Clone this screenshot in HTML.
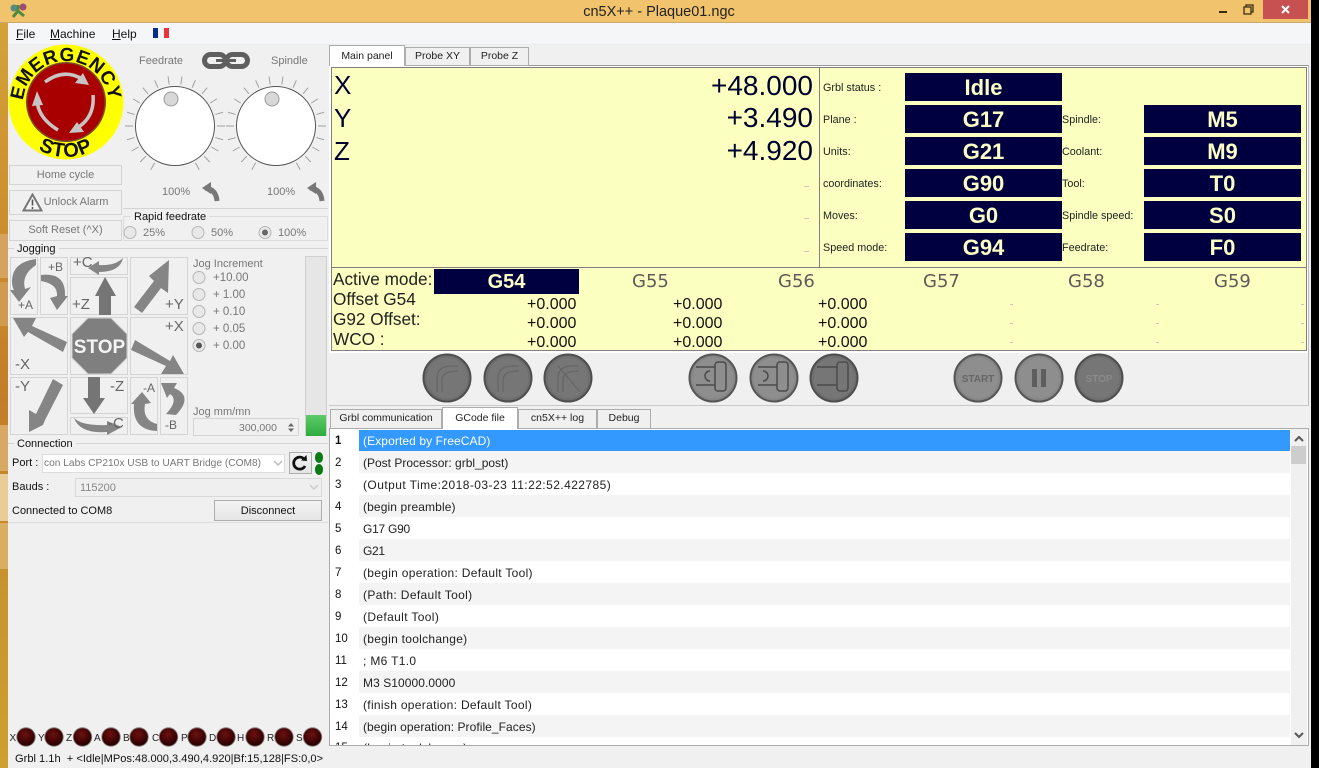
<!DOCTYPE html>
<html><head><meta charset="utf-8"><title>cn5X++ - Plaque01.ngc</title>
<style>
html,body{margin:0;padding:0;width:1319px;height:768px;overflow:hidden;background:#000}
body{position:relative;font-family:"Liberation Sans",sans-serif;font-size:12px;color:#111}
div,span.a{position:absolute}
.t{position:absolute;white-space:nowrap;line-height:14px;font-size:12px}
.g{color:#777}
.b{position:absolute;border:1px solid #d4d4d4;box-sizing:border-box;background:#f0f0f0}
.btn{position:absolute;border:1px solid #adadad;box-sizing:border-box;background:linear-gradient(#f3f3f3,#e5e5e5);text-align:center}
.d{background:#000040;color:#fbffc4;font-weight:bold;font-size:22px;line-height:29px;text-align:center;width:157px;height:28px}
.l{left:823px;font-size:10.8px;color:#222}
.l2{left:1062px;font-size:10.8px;color:#222}
.big{font-size:28px;line-height:32px;color:#000030;position:absolute;white-space:nowrap}
.v{font-size:16px;line-height:18px;color:#111;position:absolute;white-space:nowrap}
.m{font-size:17.2px;line-height:19px;color:#222;position:absolute;white-space:nowrap}
.gn{font-family:"DejaVu Sans",sans-serif;font-size:18px;line-height:20px;color:#5c5c5c;position:absolute;white-space:nowrap;top:272px}
.tab{position:absolute;box-sizing:border-box;border:1px solid #acacac;background:#f0f0f0;text-align:center;font-size:10.5px;line-height:17px;color:#222}
.on{background:#fff;border-bottom:0;line-height:20px}
.n{position:absolute;left:335px;font-size:11.5px;line-height:14px;color:#111}
.c{position:absolute;left:363px;font-size:12px;line-height:14px;color:#222;white-space:nowrap}
.r{position:absolute;left:359px;width:931px;height:22px;background:#f4f4f4}
.dash{position:absolute;width:5px;height:1px;background:#c8c8c0}
.j{position:absolute;white-space:nowrap;line-height:14px;color:#666;font-size:15px}
.js{position:absolute;white-space:nowrap;line-height:14px;color:#666;font-size:12px}
</style></head><body>

<!-- desktop strip -->
<div style="left:0;top:0;width:8px;height:768px;background:linear-gradient(#d5a43a 0,#cd9030 200px,#c27d28 400px,#c8952f 600px,#cda030 768px)"></div>
<div style="left:0;top:234px;width:8px;height:44px;background:#d6a35e"></div>
<div style="left:0;top:282px;width:8px;height:44px;background:#d29a50"></div>
<div style="left:0;top:425px;width:8px;height:46px;background:#d9a865"></div>
<div style="left:0;top:474px;width:8px;height:47px;background:#e9cc98"></div>
<div style="left:0;top:523px;width:8px;height:46px;background:#d8ae62"></div>

<!-- window -->
<div style="left:0;top:0;width:1311px;height:23px;background:#f0c36c;border-bottom:1px solid #c9ab72;box-sizing:border-box"></div>
<div style="left:8px;top:23px;width:1303px;height:745px;background:#f0f0f0"></div>
<div style="left:8px;top:23px;width:1303px;height:21px;background:#f5f6f7;border-bottom:1px solid #ececec"></div>
<div class="t" style="left:552px;top:5px;width:214px;text-align:center;font-size:14.5px;color:#222">cn5X++ - Plaque01.ngc</div>
<svg style="position:absolute;left:9px;top:2px" width="20" height="18" viewBox="0 0 20 18"><circle cx="5" cy="6" r="3.5" fill="#5a8a80"/><circle cx="14" cy="5" r="3.5" fill="#a04a70"/><path d="M9 9 4 15M9 9l6 5M9 9V3" stroke="#4e8a40" stroke-width="3"/></svg>
<div style="left:1263px;top:0;width:45px;height:19px;background:#c75050"></div>
<svg style="position:absolute;left:1219px;top:3px" width="82" height="14" viewBox="0 0 82 14"><path d="M0 9h8" stroke="#3a2c10" stroke-width="2"/><path d="M25 4h7v7h-7zM27 4V2h7v7h-2" fill="none" stroke="#3a2c10" stroke-width="1.3"/><path d="M63 3l7 7M70 3l-7 7" stroke="#fff" stroke-width="2"/></svg>

<!-- menu -->
<div class="t" style="left:16px;top:27px"><u>F</u>ile</div>
<div class="t" style="left:50px;top:27px"><u>M</u>achine</div>
<div class="t" style="left:112px;top:27px"><u>H</u>elp</div>
<div style="left:153px;top:28px;width:5px;height:10px;background:#0a2a8c"></div>
<div style="left:158px;top:28px;width:6px;height:10px;background:#f4f4f4"></div>
<div style="left:164px;top:28px;width:5px;height:10px;background:#e8323c"></div>

<!-- e-stop -->
<svg style="position:absolute;left:8px;top:44px" width="116" height="118" viewBox="8 44 116 118">
<defs><path id="ea" d="M23 104A43 43 0 0 1 109 104"/><path id="eb" d="M11 102A55 55 0 0 0 121 102"/></defs>
<circle cx="66" cy="102" r="57.500" fill="#ffff00"/>
<circle cx="66" cy="102" r="40" fill="#7a4a30"/><circle cx="66" cy="102" r="38.500" fill="#a80000"/>
<text font-family="Liberation Sans" font-weight="bold" font-size="19" fill="#111" letter-spacing=".6"><textPath href="#ea" startOffset="50%" text-anchor="middle">EMERGENCY</textPath></text>
<text font-family="Liberation Sans" font-weight="bold" font-size="20" fill="#111" letter-spacing="1"><textPath href="#eb" startOffset="50%" text-anchor="middle">STOP</textPath></text>
<g fill="none" stroke="#c8c4c4" stroke-width="3.500"><path d="M45 82Q64 68 82 79"/><path d="M37 100Q38 118 58 130"/><path d="M93 95Q95 117 77 128"/></g>
<g fill="#c8c4c4"><path d="M89 85 75 83 83 73zM37 91 32 106 43 105zM69 133 84 132 77 122z"/></g>
</svg>

<!-- home etc -->
<div class="b" style="left:9px;top:165px;width:113px;height:20px;text-align:center;line-height:18px;font-size:11px;color:#777">Home cycle</div>
<div class="b" style="left:9px;top:190px;width:113px;height:25px;text-align:center;line-height:23px;font-size:11px;color:#777;padding-left:21px">Unlock Alarm</div>
<svg style="position:absolute;left:22px;top:193px" width="21" height="19" viewBox="0 0 21 19"><path d="M10.5 1.5 1.5 17.5h18z" fill="#f4f4f4" stroke="#777" stroke-width="2"/><path d="M10.5 6.5v6M10.5 14v2" stroke="#555" stroke-width="1.6"/></svg>
<div class="b" style="left:9px;top:220px;width:113px;height:21px;text-align:center;line-height:19px;font-size:11px;color:#777">Soft Reset (^X)</div>

<!-- dials -->
<svg style="position:absolute;left:120px;top:45px" width="210" height="165" viewBox="120 45 210 165">
<defs>
<g id="dial">
<g stroke="#a0a0a0" stroke-width="1">
<line x1="0" y1="-42" x2="0" y2="-50" transform="rotate(8)"/>
<line x1="0" y1="-42" x2="0" y2="-50" transform="rotate(-8)"/>
<line x1="0" y1="-42" x2="0" y2="-50" transform="rotate(24)"/>
<line x1="0" y1="-42" x2="0" y2="-50" transform="rotate(-24)"/>
<line x1="0" y1="-42" x2="0" y2="-50" transform="rotate(40)"/>
<line x1="0" y1="-42" x2="0" y2="-50" transform="rotate(-40)"/>
<line x1="0" y1="-42" x2="0" y2="-50" transform="rotate(57)"/>
<line x1="0" y1="-42" x2="0" y2="-50" transform="rotate(-57)"/>
<line x1="0" y1="-42" x2="0" y2="-50" transform="rotate(74)"/>
<line x1="0" y1="-42" x2="0" y2="-50" transform="rotate(-74)"/>
<line x1="0" y1="-42" x2="0" y2="-50" transform="rotate(90)"/>
<line x1="0" y1="-42" x2="0" y2="-50" transform="rotate(-90)"/>
<line x1="0" y1="-42" x2="0" y2="-50" transform="rotate(106)"/>
<line x1="0" y1="-42" x2="0" y2="-50" transform="rotate(-106)"/>
<line x1="0" y1="-42" x2="0" y2="-50" transform="rotate(120)"/>
<line x1="0" y1="-42" x2="0" y2="-50" transform="rotate(-120)"/>
<line x1="0" y1="-42" x2="0" y2="-50" transform="rotate(136)"/>
<line x1="0" y1="-42" x2="0" y2="-50" transform="rotate(-136)"/>
<line x1="0" y1="-42" x2="0" y2="-50" transform="rotate(151)"/>
<line x1="0" y1="-42" x2="0" y2="-50" transform="rotate(-151)"/>
</g>
<circle r="39.500" fill="#fff" stroke="#555" stroke-width="1"/>
<circle cx="-4" cy="-27" r="7" fill="#d8d8d8" stroke="#999" stroke-width="1"/>
</g>
<g id="back"><path d="M3 3Q14 4 15 16" fill="none" stroke="#777" stroke-width="5"/><path d="M0 3 9 -3 9 9z" fill="#777"/></g>
</defs>
<use href="#dial" x="175" y="126"/><use href="#dial" x="276" y="126"/>
<use href="#back" x="202" y="185"/><use href="#back" x="307" y="185"/>
<!-- chain -->
<g fill="none" stroke="#5f5f5f" stroke-width="5"><rect x="204.500" y="54.500" width="21" height="12" rx="6"/><rect x="226.500" y="54.500" width="21" height="12" rx="6"/></g>
<path d="M216 60.500h20" stroke="#5f5f5f" stroke-width="3"/>
</svg>
<div class="t g" style="left:139px;top:54px;font-size:11px">Feedrate</div>
<div class="t g" style="left:271px;top:54px;font-size:11px">Spindle</div>
<div class="t g" style="left:162px;top:185px;font-size:11px">100%</div>
<div class="t g" style="left:267px;top:185px;font-size:11px">100%</div>

<!-- rapid -->
<div style="left:123px;top:208px;width:205px;height:1px;background:#d4d4d4"></div>
<div style="left:123px;top:216px;width:205px;height:25px;border:1px solid #dcdcdc;box-sizing:border-box"></div>
<div class="t" style="left:131px;top:210px;background:#f0f0f0;padding:0 3px;font-size:11px">Rapid feedrate</div>
<svg style="position:absolute;left:120px;top:225px" width="160" height="16" viewBox="120 225 160 16"><g fill="#e8e8e8" stroke="#b5b5b5"><circle cx="130" cy="232.500" r="6"/><circle cx="198" cy="232.500" r="6"/><circle cx="265" cy="232.500" r="6"/></g><circle cx="265" cy="232.500" r="3" fill="#666"/></svg>
<div class="t g" style="left:143px;top:226px;font-size:11px">25%</div>
<div class="t g" style="left:211px;top:226px;font-size:11px">50%</div>
<div class="t g" style="left:278px;top:226px;font-size:11px">100%</div>

<!-- jogging -->
<div style="left:8px;top:248px;width:320px;height:1px;background:#d4d4d4"></div>
<div class="t" style="left:14px;top:242px;background:#f0f0f0;padding:0 3px;font-size:11px">Jogging</div>
<div class="b" style="left:10px;top:257px;width:28px;height:58px"></div>
<div class="b" style="left:40px;top:257px;width:28px;height:58px"></div>
<div class="b" style="left:70px;top:257px;width:58px;height:18px"></div>
<div class="b" style="left:70px;top:277px;width:58px;height:38px"></div>
<div class="b" style="left:130px;top:257px;width:58px;height:58px"></div>
<div class="b" style="left:10px;top:317px;width:58px;height:58px"></div>
<div class="b" style="left:70px;top:317px;width:58px;height:58px"></div>
<div class="b" style="left:130px;top:317px;width:58px;height:58px"></div>
<div class="b" style="left:10px;top:377px;width:58px;height:58px"></div>
<div class="b" style="left:70px;top:377px;width:58px;height:37px"></div>
<div class="b" style="left:70px;top:417px;width:58px;height:18px"></div>
<div class="b" style="left:130px;top:377px;width:28px;height:58px"></div>
<div class="b" style="left:160px;top:377px;width:28px;height:58px"></div>
<svg style="position:absolute;left:8px;top:255px" width="182" height="182" viewBox="8 255 182 182">
<g fill="#858585">
<path d="M169 260 168 293 161 288 142 313 134 307 154 281 149 276z"/>
<path d="M13 318 36 318 32 326 67 342 63 352 28 332 24 337z"/>
<path d="M184 374 161 374 166 366 131 350 135 340 170 361 173 355z"/>
<path d="M29 432 29 410 36 414 53 379 63 385 45 420 43 425z"/>
<path d="M105 277 116 296 111 296 111 315 99 315 99 296 95 296z" fill="#757575"/>
<path d="M88 377H100V398H105L94 414 83 398H88z" fill="#757575"/>
<!-- curved arrows -->
<path d="M36 259Q13 262 12 280Q12 287 14 290L10 290 19 302 31 287 25 289Q21 275 36 265Z"/>
<path d="M41 275Q66 272 65 296L68 296 57 310 50 298 57 296Q58 284 41 281Z"/>
<path d="M123 258Q115 266 99 265L99 261 88 268 99 275 99 272Q120 272 123 258Z"/>
<path d="M74 418Q82 426 107 425L107 421 122 427 107 435 107 432Q80 434 74 418Z"/>
<path d="M157 431Q132 430 134 404L131 404 142 392 151 403 145 404Q142 420 157 424Z"/>
<path d="M176 415Q194 396 174 388L177 383 161 383 167 398 170 394Q179 400 166 414Z"/>
</g>
<path d="M88 318H111L127 334V358L111 374H88L72 358V334z" fill="#7f7f7f" stroke="#d0d0d0" stroke-width="1"/>
<text x="99.500" y="353" text-anchor="middle" font-family="Liberation Sans" font-weight="bold" font-size="19" fill="#f4f4f4">STOP</text>
</svg>
<div class="js" style="left:18px;top:298px">+A</div>
<div class="js" style="left:48px;top:260px">+B</div>
<div class="j" style="left:73px;top:256px">+C</div>
<div class="j" style="left:72px;top:298px">+Z</div>
<div class="j" style="left:165px;top:298px">+Y</div>
<div class="j" style="left:165px;top:320px">+X</div>
<div class="j" style="left:15px;top:358px">-X</div>
<div class="j" style="left:15px;top:380px">-Y</div>
<div class="j" style="left:110px;top:380px">-Z</div>
<div class="j" style="left:108px;top:417px">-C</div>
<div class="js" style="left:143px;top:381px">-A</div>
<div class="js" style="left:165px;top:418px">-B</div>

<div class="t g" style="left:193px;top:257px;font-size:11px">Jog Increment</div>
<svg style="position:absolute;left:190px;top:268px" width="20" height="86" viewBox="190 268 20 86"><g fill="#e8e8e8" stroke="#b5b5b5"><circle cx="199" cy="277.500" r="6"/><circle cx="199" cy="294.500" r="6"/><circle cx="199" cy="311.500" r="6"/><circle cx="199" cy="328.500" r="6"/><circle cx="199" cy="345.500" r="6"/></g><circle cx="199" cy="345.500" r="3" fill="#555"/></svg>
<div class="t g" style="left:213px;top:271px;font-size:11.500px">+10.00</div>
<div class="t g" style="left:213px;top:288px;font-size:11.500px">+ 1.00</div>
<div class="t g" style="left:213px;top:305px;font-size:11.500px">+ 0.10</div>
<div class="t g" style="left:213px;top:322px;font-size:11.500px">+ 0.05</div>
<div class="t g" style="left:213px;top:339px;font-size:11.500px">+ 0.00</div>
<div class="t g" style="left:193px;top:405px;font-size:11px">Jog mm/mn</div>
<div class="b" style="left:193px;top:418px;width:106px;height:18px"></div>
<div class="t g" style="left:239px;top:421px;font-size:10.500px">300,000</div>
<svg style="position:absolute;left:285px;top:421px" width="12" height="13" viewBox="0 0 12 13"><path d="M3 5.500h6L6 2zM3 7.500h6L6 11z" fill="#666"/></svg>
<div style="left:305px;top:256px;width:22px;height:180px;background:#e6e6e6;border:1px solid #d0d0d0;box-sizing:border-box"></div>
<div style="left:306px;top:415px;width:20px;height:21px;background:linear-gradient(#5cca6a,#2eac3e)"></div>

<!-- connection -->
<div style="left:8px;top:443px;width:320px;height:1px;background:#d4d4d4"></div>
<div class="t" style="left:14px;top:437px;background:#f0f0f0;padding:0 3px;font-size:11px">Connection</div>
<div class="t" style="left:12px;top:456px;font-size:11px">Port :</div>
<div style="left:42px;top:454px;width:243px;height:19px;background:#fff;border:1px solid #ddd;box-sizing:border-box"></div>
<div class="t g" style="left:44px;top:457px;font-size:10.200px">con Labs CP210x USB to UART Bridge (COM8)</div>
<svg style="position:absolute;left:273px;top:460px" width="10" height="7"><path d="M1 1l4 4 4-4" fill="none" stroke="#bbb" stroke-width="1.500"/></svg>
<div class="btn" style="left:289px;top:452px;width:23px;height:22px"></div>
<svg style="position:absolute;left:291px;top:454px" width="18" height="18" viewBox="0 0 18 18"><path d="M13.500 5.500A6 6 0 1 0 14 12" fill="none" stroke="#111" stroke-width="2.800"/><path d="M10 6.500 16 7 15.500 1z" fill="#111"/></svg>
<div style="left:315px;top:452px;width:8px;height:11px;border-radius:4px/5px;background:#0a7a14"></div>
<div style="left:315px;top:464px;width:8px;height:11px;border-radius:4px/5px;background:#0a7a14"></div>
<div class="t" style="left:12px;top:480px;font-size:11px">Bauds :</div>
<div style="left:75px;top:478px;width:247px;height:19px;background:#efefef;border:1px solid #d8d8d8;box-sizing:border-box"></div>
<div class="t" style="left:80px;top:481px;font-size:11px;color:#888">115200</div>
<svg style="position:absolute;left:309px;top:484px" width="10" height="7"><path d="M1 1l4 4 4-4" fill="none" stroke="#ccc" stroke-width="1.500"/></svg>
<div class="t" style="left:12px;top:504px;font-size:11px">Connected to COM8</div>
<div class="btn" style="left:214px;top:500px;width:108px;height:21px;line-height:20px;font-size:11px">Disconnect</div>
<div style="left:8px;top:522px;width:320px;height:1px;background:#dcdcdc"></div>

<!-- LEDs -->
<svg style="position:absolute;left:8px;top:725px" width="320" height="24" viewBox="8 725 320 24">
<defs><radialGradient id="lg" cx=".45" cy=".35" r=".6"><stop offset="0" stop-color="#6e1010"/><stop offset="1" stop-color="#2c0000"/></radialGradient>
<g id="led"><circle r="9.700" fill="#8a8080"/><circle r="8.800" fill="url(#lg)"/></g></defs>
<use href="#led" x="26" y="737"/><use href="#led" x="54" y="737"/><use href="#led" x="82.500" y="737"/><use href="#led" x="111" y="737"/><use href="#led" x="139" y="737"/><use href="#led" x="168.500" y="737"/><use href="#led" x="197" y="737"/><use href="#led" x="226" y="737"/><use href="#led" x="255" y="737"/><use href="#led" x="284" y="737"/><use href="#led" x="312.500" y="737"/>
<g font-family="Liberation Sans" font-size="10" fill="#222"><text x="9.500" y="741">X</text><text x="38" y="741">Y</text><text x="66" y="741">Z</text><text x="94" y="741">A</text><text x="123" y="741">B</text><text x="152" y="741">C</text><text x="181" y="741">P</text><text x="209" y="741">D</text><text x="237" y="741">H</text><text x="267" y="741">R</text><text x="296" y="741">S</text></g>
</svg>
<div class="t" style="left:15px;top:752px;font-size:11.100px;white-space:pre">Grbl 1.1h  + &lt;Idle|MPos:48.000,3.490,4.920|Bf:15,128|FS:0,0&gt;</div>

<!-- top tabs -->
<div style="left:329px;top:65px;width:980px;height:340px;border-top:1px solid #9a9a9a;border-right:1px solid #bdbdbd;box-sizing:border-box"></div>
<div class="tab on" style="left:329px;top:45px;width:76px;height:21px;z-index:2">Main panel</div>
<div class="tab" style="left:405px;top:47px;width:65px;height:19px">Probe XY</div>
<div class="tab" style="left:470px;top:47px;width:59px;height:19px">Probe Z</div>

<!-- yellow panel -->
<div style="left:329px;top:66px;width:979px;height:287px;background:#fff"></div>
<div style="left:331px;top:67px;width:976px;height:284px;background:#fbffbf;border:1px solid #808080;box-sizing:border-box"></div>
<div style="left:819px;top:68px;width:1px;height:199px;background:#808080"></div>
<div style="left:331px;top:267px;width:976px;height:1px;background:#808080"></div>

<div class="big" style="left:334px;top:69px;font-size:26px">X</div>
<div class="big" style="left:334px;top:102px;font-size:26px">Y</div>
<div class="big" style="left:334px;top:135px;font-size:26px">Z</div>
<div class="big" style="right:506px;top:70px">+48.000</div>
<div class="big" style="right:506px;top:102px">+3.490</div>
<div class="big" style="right:506px;top:135px">+4.920</div>
<div class="dash" style="left:804px;top:186px"></div><div class="dash" style="left:804px;top:218px"></div><div class="dash" style="left:804px;top:251px"></div>

<div class="t l" style="top:81px">Grbl status :</div>
<div class="t l" style="top:113px">Plane :</div>
<div class="t l" style="top:145px">Units:</div>
<div class="t l" style="top:177px">coordinates:</div>
<div class="t l" style="top:209px">Moves:</div>
<div class="t l" style="top:241px">Speed mode:</div>
<div class="d" style="left:905px;top:73px">Idle</div>
<div class="d" style="left:905px;top:105px">G17</div>
<div class="d" style="left:905px;top:137px">G21</div>
<div class="d" style="left:905px;top:169px">G90</div>
<div class="d" style="left:905px;top:201px">G0</div>
<div class="d" style="left:905px;top:233px">G94</div>
<div class="t l2" style="top:113px">Spindle:</div>
<div class="t l2" style="top:145px">Coolant:</div>
<div class="t l2" style="top:177px">Tool:</div>
<div class="t l2" style="top:209px">Spindle speed:</div>
<div class="t l2" style="top:241px">Feedrate:</div>
<div class="d" style="left:1144px;top:105px">M5</div>
<div class="d" style="left:1144px;top:137px">M9</div>
<div class="d" style="left:1144px;top:169px">T0</div>
<div class="d" style="left:1144px;top:201px">S0</div>
<div class="d" style="left:1144px;top:233px">F0</div>

<div class="m" style="left:333px;top:270px">Active mode:</div>
<div class="m" style="left:333px;top:290px">Offset G54</div>
<div class="m" style="left:333px;top:310px">G92 Offset:</div>
<div class="m" style="left:333px;top:330px">WCO :</div>
<div class="d" style="left:434px;top:269px;width:145px;height:25px;line-height:27px;font-size:20px">G54</div>
<div class="gn" style="left:632px">G55</div>
<div class="gn" style="left:778px">G56</div>
<div class="gn" style="left:923px">G57</div>
<div class="gn" style="left:1068px">G58</div>
<div class="gn" style="left:1214px">G59</div>
<div class="v" style="left:527px;top:296px">+0.000</div><div class="v" style="left:673px;top:296px">+0.000</div><div class="v" style="left:818px;top:296px">+0.000</div>
<div class="v" style="left:527px;top:315px">+0.000</div><div class="v" style="left:673px;top:315px">+0.000</div><div class="v" style="left:818px;top:315px">+0.000</div>
<div class="v" style="left:527px;top:334px">+0.000</div><div class="v" style="left:673px;top:334px">+0.000</div><div class="v" style="left:818px;top:334px">+0.000</div>
<div class="dash" style="left:1010px;top:304px;width:3px"></div><div class="dash" style="left:1156px;top:304px;width:3px"></div><div class="dash" style="left:1301px;top:304px;width:3px"></div>
<div class="dash" style="left:1010px;top:323px;width:3px"></div><div class="dash" style="left:1156px;top:323px;width:3px"></div><div class="dash" style="left:1301px;top:323px;width:3px"></div>
<div class="dash" style="left:1010px;top:342px;width:3px"></div><div class="dash" style="left:1156px;top:342px;width:3px"></div><div class="dash" style="left:1301px;top:342px;width:3px"></div>

<!-- round buttons -->
<svg style="position:absolute;left:420px;top:352px" width="710" height="52" viewBox="420 352 710 52">
<defs><g id="rb"><circle r="23.500" fill="#6e6e6e" stroke="#4e4e4e" stroke-width="2"/><circle r="20.500" fill="#767676"/></g><g id="rb2"><circle r="23.500" fill="#868686" stroke="#555" stroke-width="2"/><circle r="20.500" fill="#8e8e8e"/></g></defs>
<use href="#rb" x="447" y="378"/><use href="#rb" x="508" y="378"/><use href="#rb" x="568" y="378"/>
<use href="#rb2" x="713" y="378"/><use href="#rb2" x="774" y="378"/><use href="#rb" x="834" y="378"/>
<use href="#rb2" x="978" y="378"/><use href="#rb2" x="1039" y="378"/><use href="#rb" x="1099" y="378"/>
<g fill="none" stroke="#666" stroke-width="1.300">
<path d="M437 392V378Q437 366 452 366H458M442 392V380Q442 371 458 371"/>
<path d="M498 392V378Q498 366 513 366H519M503 392V380Q503 371 519 371"/>
<path d="M558 392V378Q558 366 573 366H579M563 392V380Q563 371 579 371M558 366 580 392"/>
</g>
<g fill="none" stroke="#4a4a4a" stroke-width="1.500">
<path d="M696 367H715M696 385H715"/><rect x="715" y="362" width="11" height="29" rx="3"/><path d="M710 371A5 5 0 1 0 710 381"/>
<path d="M758 367H777M758 385H777"/><rect x="777" y="362" width="11" height="29" rx="3"/><path d="M763 371A5 5 0 1 1 763 381"/>
<path d="M817 367H837M817 385H837"/><rect x="837" y="362" width="11" height="29" rx="3"/>
</g>
<text x="978" y="382" text-anchor="middle" font-family="Liberation Sans" font-weight="bold" font-size="10" fill="#666">START</text>
<path d="M1032 369h5v18h-5zM1041 369h5v18h-5z" fill="#5e5e5e"/>
<text x="1099" y="382" text-anchor="middle" font-family="Liberation Sans" font-weight="bold" font-size="10" fill="#8a8a8a">STOP</text>
</svg>

<!-- bottom tabs -->
<div style="left:329px;top:405px;width:980px;height:1px;background:#c8c8c8"></div>
<div style="left:329px;top:428px;width:980px;height:318px;background:#fff;border:1px solid #acacac;box-sizing:border-box"></div>
<div class="tab" style="left:330px;top:409px;width:112px;height:20px">Grbl communication</div>
<div class="tab on" style="left:442px;top:407px;width:76px;height:22px;z-index:2">GCode file</div>
<div class="tab" style="left:518px;top:409px;width:79px;height:20px">cn5X++ log</div>
<div class="tab" style="left:597px;top:409px;width:54px;height:20px">Debug</div>

<!-- table -->
<div style="left:359px;top:430px;width:931px;height:21px;background:#3399ff"></div>
<div class="r" style="top:451px"></div><div class="r" style="top:495px"></div><div class="r" style="top:539px"></div><div class="r" style="top:583px"></div><div class="r" style="top:627px"></div><div class="r" style="top:671px"></div><div class="r" style="top:715px"></div>
<div class="n" style="top:434px;font-weight:bold">1</div><div class="c" style="top:434px;color:#fff;letter-spacing:.1px">(Exported by FreeCAD)</div>
<div class="n" style="top:456px">2</div><div class="c" style="top:456px">(Post Processor: grbl_post)</div>
<div class="n" style="top:478px">3</div><div class="c" style="top:478px;letter-spacing:.44px">(Output Time:2018-03-23 11:22:52.422785)</div>
<div class="n" style="top:500px">4</div><div class="c" style="top:500px;letter-spacing:.12px">(begin preamble)</div>
<div class="n" style="top:522px">5</div><div class="c" style="top:522px;letter-spacing:-.25px">G17 G90</div>
<div class="n" style="top:544px">6</div><div class="c" style="top:544px;letter-spacing:-.3px">G21</div>
<div class="n" style="top:566px">7</div><div class="c" style="top:566px;letter-spacing:.3px">(begin operation: Default Tool)</div>
<div class="n" style="top:588px">8</div><div class="c" style="top:588px;letter-spacing:.35px">(Path: Default Tool)</div>
<div class="n" style="top:610px">9</div><div class="c" style="top:610px;letter-spacing:.36px">(Default Tool)</div>
<div class="n" style="top:632px">10</div><div class="c" style="top:632px;letter-spacing:.28px">(begin toolchange)</div>
<div class="n" style="top:654px">11</div><div class="c" style="top:654px;letter-spacing:.33px">; M6 T1.0</div>
<div class="n" style="top:676px">12</div><div class="c" style="top:676px;letter-spacing:.07px">M3 S10000.0000</div>
<div class="n" style="top:698px">13</div><div class="c" style="top:698px;letter-spacing:.31px">(finish operation: Default Tool)</div>
<div class="n" style="top:720px">14</div><div class="c" style="top:720px;letter-spacing:.06px">(begin operation: Profile_Faces)</div>
<div style="left:335px;top:741px;width:300px;height:4px;overflow:hidden"><div class="c" style="left:28px;top:0;letter-spacing:.28px">(begin toolchange)</div><div class="n" style="left:0;top:0">15</div></div>
<div style="left:1291px;top:429px;width:16px;height:316px;background:#f0f0f0"></div>
<div style="left:1291px;top:446px;width:15px;height:18px;background:#cdcdcd"></div>
<svg style="position:absolute;left:1291px;top:432px" width="16" height="310" viewBox="0 0 16 310"><path d="M4 9l4-4 4 4" fill="none" stroke="#555" stroke-width="2"/><path d="M4 301l4 4 4-4" fill="none" stroke="#555" stroke-width="2"/></svg>
</body></html>
